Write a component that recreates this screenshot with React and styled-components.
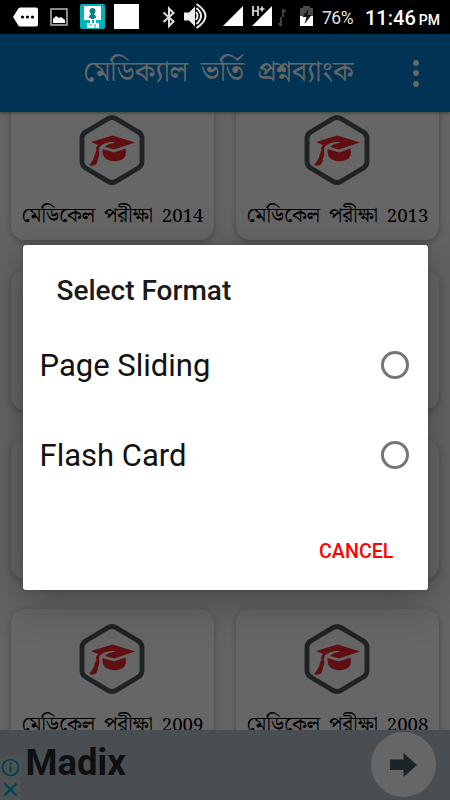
import React, { useState } from 'react'
import styled, { createGlobalStyle } from 'styled-components'

const GlobalStyle = createGlobalStyle`
  body {
    margin: 0;
    background: #000;
    overflow: hidden;
  }
`

const Screen = styled.div`
  position: relative;
  display: flex;
  flex-direction: column;
  width: 450px;
  height: 800px;
  overflow: hidden;
  font-family: Roboto, sans-serif;
`

const StatusBar = styled.div`
  display: flex;
  flex: none;
  align-items: center;
  height: 34px;
  background: #000;
  color: #fff;
`

const StatusIcons = styled.svg`
  display: block;
  flex: none;
  width: 316px;
  height: 34px;
`

const Battery = styled.span`
  width: 49px;
  padding: 1px 0 0 6px;
  box-sizing: border-box;
  color: #e0e0e0;
  font-size: 17.5px;
  line-height: 34px;
  letter-spacing: -0.5px;
  white-space: nowrap;
`

const Clock = styled.span`
  padding-top: 3px;
  font-size: 20px;
  font-weight: 500;
  line-height: 34px;
  white-space: nowrap;

  small {
    margin-left: 3px;
    font-size: 14px;
  }
`

const Toolbar = styled.header`
  display: flex;
  flex: none;
  align-items: center;
  justify-content: space-between;
  height: 78px;
  box-sizing: border-box;
  padding: 0 31px 0 83px;
  background: #0080d2;
  box-shadow: 0 1px 3px rgba(0, 0, 0, 0.4);
  z-index: 1;
`

const Title = styled.h1`
  margin: 0;
  color: #fff;
  font-family: 'Noto Serif Bengali', 'Noto Sans Bengali', 'Liberation Serif', serif;
  font-size: 29.3px;
  font-weight: 400;
  line-height: 78px;
  word-spacing: 5.5px;
  white-space: nowrap;
`

const MenuButton = styled.button`
  display: flex;
  flex-direction: column;
  gap: 4.5px;
  padding: 0;
  border: 0;
  background: none;

  i {
    width: 6px;
    height: 6px;
    border-radius: 50%;
    background: #fff;
  }
`

const Content = styled.main`
  flex: 1;
  min-height: 0;
  overflow: hidden;
  background: #fafafa;
`

const Grid = styled.div`
  display: grid;
  grid-template-columns: 203px 203px;
  grid-auto-rows: 140px;
  gap: 29.7px 22px;
  margin-top: -12px;
  padding: 0 11px;
`

const Card = styled.div`
  display: flex;
  flex-direction: column;
  align-items: center;
  box-sizing: border-box;
  padding-top: 15px;
  border-radius: 14px;
  background: #fff;
  box-shadow: 0 2px 7px rgba(0, 0, 0, 0.28);
`

const CardIcon = styled.svg`
  flex: none;
  width: 66px;
  height: 70px;
  margin-right: 2px;
`

const CardLabel = styled.div`
  margin-top: 14px;
  color: #000;
  font-family: 'Noto Serif Bengali', 'Noto Sans Bengali', 'Liberation Serif', serif;
  font-size: 21.3px;
  line-height: 34px;
  word-spacing: 3.2px;
  white-space: nowrap;

  span {
    font-size: 18.7px;
  }
`

const AdBanner = styled.footer`
  display: flex;
  flex: none;
  align-items: stretch;
  height: 70px;
  background: #b4c3cc;
`

const AdBadges = styled.div`
  display: flex;
  flex-direction: column;
  justify-content: flex-end;
  width: 21px;
  gap: 1px;

  svg {
    display: block;
    width: 21px;
    height: 21px;
    background: #c3cdd3;
  }
`

const AdTitle = styled.div`
  flex: 1;
  padding-left: 4.5px;
  color: #2a2a2a;
  font-size: 36.5px;
  font-weight: 700;
  line-height: 65px;
`

const AdArrow = styled.div`
  display: flex;
  align-items: center;
  justify-content: center;
  width: 65px;
  height: 65px;
  margin: 2px 14px 0 0;
  border-radius: 50%;
  background: #fff;
`

const Scrim = styled.div`
  position: absolute;
  inset: 34px 0 0;
  display: flex;
  align-items: center;
  justify-content: center;
  background: rgba(0, 0, 0, 0.6);
  z-index: 2;
`

const Dialog = styled.div`
  display: flex;
  flex-direction: column;
  width: 405px;
  height: 345px;
  border-radius: 3px;
  background: #fff;
  box-shadow: 0 10px 40px 4px rgba(0, 0, 0, 0.26), 0 0 5px rgba(0, 0, 0, 0.15);
`

const DialogTitle = styled.h2`
  margin: 0;
  padding: 27px 34px 0;
  color: #1a1a1a;
  font-size: 28px;
  font-weight: 500;
  line-height: 38px;
`

const Option = styled.button`
  display: flex;
  align-items: center;
  justify-content: space-between;
  height: 90px;
  padding: 0 19px 0 17px;
  border: 0;
  background: none;
  color: #111;
  font: 400 31px/90px Roboto, sans-serif;
`

const OptionName = styled.span`
  padding-top: 3px;
`

const Options = styled.div`
  display: flex;
  flex-direction: column;
  margin-top: 10px;
`

const Radio = styled.span`
  display: flex;
  width: 28px;
  height: 28px;
  box-sizing: border-box;
  border: 3px solid #757575;
  border-radius: 50%;

  &::after {
    content: '';
    margin: auto;
    width: 14px;
    height: 14px;
    border-radius: 50%;
    background: ${props => (props.$checked ? '#757575' : 'transparent')};
  }
`

const CancelButton = styled.button`
  align-self: flex-end;
  margin: 38px 34px 0 0;
  padding: 0;
  border: 0;
  background: none;
  color: #f00;
  font: 500 19.7px/28px Roboto, sans-serif;
`

const exams = ['2014', '2013', '2012', '2011', '2010', '2010', '2009', '2008']
const formats = ['Page Sliding', 'Flash Card']

const StatusGlyphs = () => (
  <StatusIcons viewBox='0 0 316 34'>
    {/* message, picture, app and blank notifications */}
    <path d='M13 17l5-8q1-1.500 2-1.500h16q2 0 2 2v15q0 2-2 2H20q-1 0-2-1.500z' fill='#fff' />
    <g fill='#000'>
      <circle cx='22.5' cy='17' r='1.6' />
      <circle cx='27.5' cy='17' r='1.6' />
      <circle cx='32.5' cy='17' r='1.6' />
    </g>
    <rect x='51' y='9' width='16' height='16' fill='none' stroke='#aaa' strokeWidth='1.6' />
    <path d='M53 23v-4l3-3 3 2 2-1 4 3v3z' fill='#fff' />
    <rect x='80' y='4' width='25' height='25' rx='2' fill='#00b3bd' />
    <rect x='84' y='6' width='17' height='14' fill='#fff' />
    <circle cx='92.5' cy='11' r='3' fill='#087f87' />
    <path d='M89 18q0-4 3.500-4t3.500 4zM91 13h3v6h-3z' fill='#087f87' />
    <path d='M90 19h2v4h-2zM94 19h2v4h-2zM87 23h12v5H87z' fill='#fff' />
    <path d='M89 25h3M94 25h2M94 27h2' stroke='#00b3bd' />
    <rect x='114' y='4' width='25' height='25' fill='#fff' />
    {/* bluetooth and volume */}
    <path d='M163.500 12.500l10 9-4.500 4.500V8.500l4.500 4.500-10 9' fill='none' stroke='#ddd' strokeWidth='2' />
    <path d='M184 12.500h5l6-6v20l-6-6h-5z' fill='#eee' />
    <path d='M196 12q3 4 0 8M196.500 8q9 8 0 16M196.500 4q18 12 0 24' fill='none' stroke='#eee' strokeWidth='2' />
    {/* signal strength for both SIMs */}
    <path d='M223 26L243 6v20z' fill='#fff' />
    <path d='M252 26l20-20v20z' fill='#fff' />
    <path d='M250 4h16v7l-6 5h-10z' fill='#000' />
    <path d='M253 6v10M258 6v10M253 11h5M259.500 9h5M262 6.500v5' fill='none' stroke='#ddd' strokeWidth='1.700' />
    <path d='M283 17V9M281 26v-9M278.500 23l2.500 3M283 9l2.500 3' fill='none' stroke='#4a4a4a' strokeWidth='1.700' />
    {/* charging battery */}
    <path d='M300 8h3V6h7v2h3v8h-13z' fill='#4a4a4a' />
    <path d='M300 16h13v10h-13z' fill='#fff' />
    <path d='M308.500 9l-6 8h4l-2 7 7-9h-4z' fill='#111' />
  </StatusIcons>
)

const CapIcon = () => (
  <CardIcon viewBox='0 0 66 70'>
    <path
      d='M29 3.700Q33 1.300 37 3.700L58.500 16.500Q63 19 63 23.500V46.500Q63 51 58.500 53.500L37 66.300Q33 68.700 29 66.300L7.500 53.500Q3 51 3 46.500V23.500Q3 19 7.500 16.500Z'
      fill='none'
      stroke='#4f5859'
      strokeWidth='4.900'
    />
    <path d='M12 27L33.500 20.500 56 27.500 35 34.500l-9-2.500q3-3.500 9.500-4v-1q-10-.5-15 5l-.5 4q1 3-1 7.500-.5 4.500-2 6-3 2-7 .5 3-3 5-7.500 1-5 2.500-6.500l-.5-3q1-2 2-3z' fill='#f0232b' />
    <path d='M23.500 34l11.500 3.500 11.500-4q1.500 7.500-2.500 10.500-8.500 4.500-17 0-4-3-3.500-10z' fill='#f0232b' />
  </CardIcon>
)

const App = () => {
  const [open, setOpen] = useState(true)
  const [format, setFormat] = useState(null)

  return (
    <Screen>
      <GlobalStyle />
      <StatusBar>
        <StatusGlyphs />
        <Battery>76%</Battery>
        <Clock>11:46<small>PM</small></Clock>
      </StatusBar>

      <Toolbar>
        <Title>মেডিক্যাল ভর্তি প্রশ্নব্যাংক</Title>
        <MenuButton aria-label='Menu'>
          <i />
          <i />
          <i />
        </MenuButton>
      </Toolbar>

      <Content>
        <Grid>
          {exams.map((year, index) => (
            <Card key={index}>
              <CapIcon />
              <CardLabel>মেডিকেল পরীক্ষা <span>{year}</span></CardLabel>
            </Card>
          ))}
        </Grid>
      </Content>

      <AdBanner>
        <AdBadges>
          <svg viewBox='0 0 21 21' fill='none' stroke='#00a5bd' strokeWidth='1.700'>
            <circle cx='10.500' cy='10.500' r='8' />
            <path d='M10.500 9v6M10.500 5.500v2' strokeWidth='2' />
          </svg>
          <svg viewBox='0 0 21 21' fill='none' stroke='#00a5bd' strokeWidth='2'>
            <path d='M4.500 4.500l12 12M16.500 4.500l-12 12' />
          </svg>
        </AdBadges>
        <AdTitle>Madix</AdTitle>
        <AdArrow>
          <svg width='27' height='24' viewBox='0 0 27 24'>
            <path d='M0 6.500h13.500V0L27 12 13.500 24v-7H0z' fill='#455a64' />
          </svg>
        </AdArrow>
      </AdBanner>

      {open && (
        <Scrim>
          <Dialog role='dialog'>
            <DialogTitle>Select Format</DialogTitle>
            <Options>
              {formats.map(name => (
                <Option key={name} onClick={() => setFormat(name)}>
                  <OptionName>{name}</OptionName>
                  <Radio $checked={format === name} />
                </Option>
              ))}
            </Options>
            <CancelButton onClick={() => setOpen(false)}>CANCEL</CancelButton>
          </Dialog>
        </Scrim>
      )}
    </Screen>
  )
}

export default App
